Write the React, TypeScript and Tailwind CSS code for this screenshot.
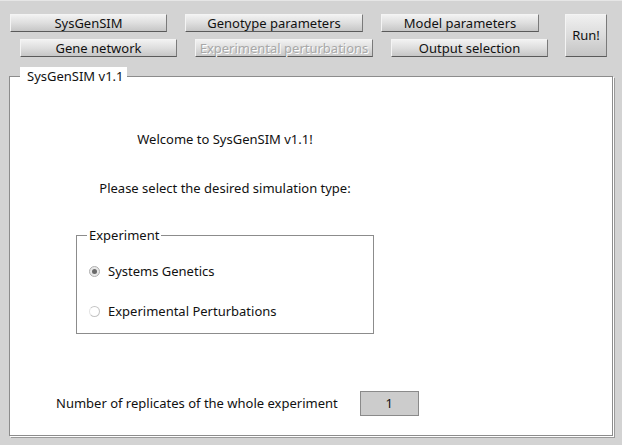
import React from "react";

const font = { fontFamily: '"Noto Sans", "DejaVu Sans", sans-serif' };

function Btn({ label, w, disabled }: { label: string; w: string; disabled?: boolean }) {
    return (
        <button
            className={`${w} h-[18px] flex items-center justify-center text-[13px] leading-none bg-gradient-to-b from-[#f2f2f2] via-[#dedede] to-[#c6c6c6] border-t border-l border-t-[#f4f4f4] border-l-[#f4f4f4] border-b border-r border-b-[#5a5a5a] border-r-[#7a7a7a] ${disabled ? "text-[#a8a8a8] [text-shadow:1px_1px_0_#ffffff]" : "text-[#111]"}`}
        >
            {label}
        </button>
    );
}

export default function App() {
    return (
        <div className="w-[622px] h-[445px] bg-[#d3d3d3] overflow-hidden border-t border-t-[#e6e6e6]" style={font}>
            <div className="flex pt-[13px]">
                <div className="flex flex-col gap-[7px]">
                    <div className="flex gap-[18px] pl-[10px]">
                        <Btn label="SysGenSIM" w="w-[157px]" />
                        <Btn label="Genotype parameters" w="w-[178px]" />
                        <Btn label="Model parameters" w="w-[158px]" />
                    </div>
                    <div className="flex gap-[18px] pl-[20px]">
                        <Btn label="Gene network" w="w-[157px]" />
                        <Btn label="Experimental perturbations" w="w-[178px]" disabled />
                        <Btn label="Output selection" w="w-[157px]" />
                    </div>
                </div>
                <button className="ml-[17px] w-[42px] h-[43px] flex items-center justify-center text-[13px] text-[#111] bg-gradient-to-b from-[#f0f0f0] via-[#dcdcdc] to-[#c4c4c4] border-t border-l border-t-[#f4f4f4] border-l-[#f4f4f4] border-b border-r border-b-[#5a5a5a] border-r-[#7a7a7a]">
                    Run!
                </button>
            </div>

            {/* main panel */}
            <div className="relative ml-[9px] mt-[19px] w-[604px] h-[360px] bg-white border border-[#8c8c8c] shadow-[1px_1px_0_#ffffff,2px_2px_0_#9a9a9a]">
                <div className="absolute left-[10px] -top-[10px] bg-white pl-[7px] pr-[3px] text-[13px] leading-[16px] text-[#111] pt-[1px]">
                    SysGenSIM v1.1
                </div>

                <div className="w-[430px] text-center text-[13px] text-[#111] pt-[53px]">
                    <div>Welcome to SysGenSIM v1.1!</div>
                    <div className="mt-[29px]">Please select the desired simulation type:</div>
                </div>

                <div className="relative ml-[66px] mt-[37px] w-[298px] h-[99px] border border-[#8c8c8c]">
                    <div className="absolute left-[10px] -top-[10px] bg-white px-[2px] text-[13px] leading-[18px] text-[#111]">
                        Experiment
                    </div>
                    <div className="flex flex-col gap-[22px] pl-[12px] pt-[26px] text-[13px] text-[#111]">
                        <label className="flex items-center gap-[8px] leading-[18px]">
                            <span className="w-[11px] h-[11px] rounded-full border border-[#b0b0b0] bg-[#e8e8e8] flex items-center justify-center">
                                <span className="w-[5px] h-[5px] rounded-full bg-[#6a6a6a]" />
                            </span>
                            Systems Genetics
                        </label>
                        <label className="flex items-center gap-[8px] leading-[18px]">
                            <span className="w-[11px] h-[11px] rounded-full border border-[#c4c4c4] border-l-[#e4e4e4] bg-white" />
                            Experimental Perturbations
                        </label>
                    </div>
                </div>

                <div className="flex items-center ml-[46px] mt-[57px] text-[13px] text-[#111]">
                    <span>Number of replicates of the whole experiment</span>
                    <div className="ml-[22px] w-[59px] h-[25px] bg-[#cccccc] border border-[#8a8a8a] flex items-center justify-center">
                        1
                    </div>
                </div>
            </div>
        </div>
    );
}
